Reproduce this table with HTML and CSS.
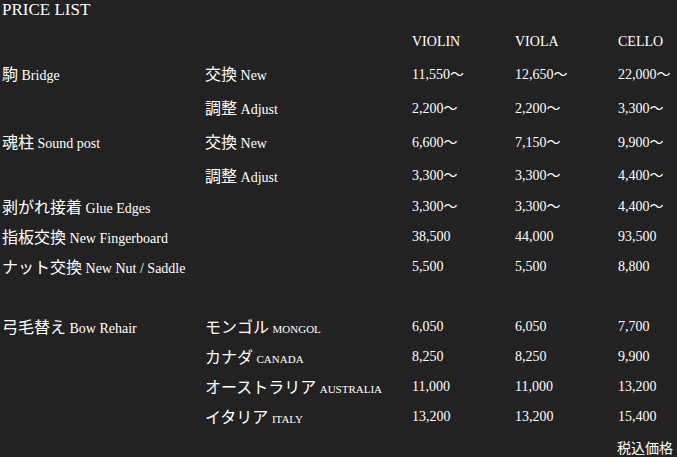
FILE: index.html
```html
<!DOCTYPE html>
<html lang="ja">
<head>
<meta charset="utf-8">
<title>PRICE LIST</title>
<link rel="stylesheet" href="styles.css">
</head>
<body>
<main class="page">
  <h1 class="title">PRICE LIST</h1>
  <div class="table">
    <div></div><div></div><div class="head">VIOLIN</div><div class="head">VIOLA</div><div class="head">CELLO</div>

    <div><span class="j">駒</span> Bridge</div><div><span class="j">交換</span> New</div><div>11,550〜</div><div>12,650〜</div><div>22,000〜</div>
    <div></div><div><span class="j">調整</span> Adjust</div><div>2,200〜</div><div>2,200〜</div><div>3,300〜</div>

    <div><span class="j">魂柱</span> Sound post</div><div><span class="j">交換</span> New</div><div>6,600〜</div><div>7,150〜</div><div>9,900〜</div>
    <div></div><div><span class="j">調整</span> Adjust</div><div>3,300〜</div><div>3,300〜</div><div>4,400〜</div>

    <div><span class="j">剥がれ接着</span> Glue Edges</div><div></div><div>3,300〜</div><div>3,300〜</div><div>4,400〜</div>
    <div><span class="j">指板交換</span> New Fingerboard</div><div></div><div>38,500</div><div>44,000</div><div>93,500</div>
    <div><span class="j">ナット交換</span> New Nut / Saddle</div><div></div><div>5,500</div><div>5,500</div><div>8,800</div>

    <div class="spacer"></div>

    <div><span class="j">弓毛替え</span> Bow Rehair</div><div><span class="j">モンゴル</span> <span class="sc">MONGOL</span></div><div>6,050</div><div>6,050</div><div>7,700</div>
    <div></div><div><span class="j">カナダ</span> <span class="sc">CANADA</span></div><div>8,250</div><div>8,250</div><div>9,900</div>
    <div></div><div><span class="j">オーストラリア</span> <span class="sc">AUSTRALIA</span></div><div>11,000</div><div>11,000</div><div>13,200</div>
    <div></div><div><span class="j">イタリア</span> <span class="sc">ITALY</span></div><div>13,200</div><div>13,200</div><div>15,400</div>
  </div>
  <p class="note">税込価格</p>
</main>
</body>
</html>
```
FILE: styles.css
```css
html, body {
  margin: 0;
  padding: 0;
  background: #222222;
}

body {
  color: #ffffff;
  font-family: "Liberation Serif", "Noto Sans CJK JP", serif;
  font-size: 14px;
}

.page {
  width: 677px;
  height: 457px;
  box-sizing: border-box;
  padding: 0 4px 0 2px;
  overflow: hidden;
}

.title {
  margin: 0;
  height: 20px;
  line-height: 20px;
  font-size: 17px;
  font-weight: normal;
}

.table {
  margin-top: 7px;
  display: grid;
  grid-template-columns: 203px 207px 103px 103px 1fr;
  grid-template-rows: 30px 35px 33px 35px 32px repeat(8, 30px);
  align-items: center;
  white-space: nowrap;
}

.table > div {
  display: block;
  line-height: 20px;
}

.spacer {
  grid-column: 1 / -1;
  height: 30px;
}

.j {
  font-family: "Noto Sans CJK JP", sans-serif;
  font-size: 16px;
}

.sc {
  font-size: 11px;
}

.note {
  margin: 0;
  height: 30px;
  line-height: 30px;
  text-align: right;
  font-family: "Noto Sans CJK JP", sans-serif;
  font-size: 14px;
}
```
